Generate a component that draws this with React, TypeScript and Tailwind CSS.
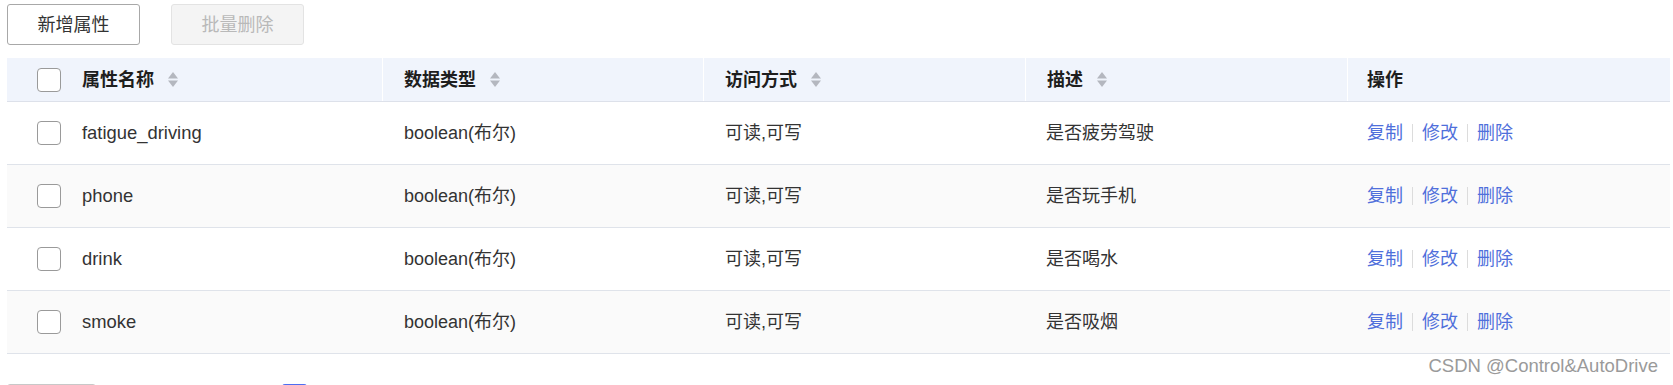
import React from 'react';

type Attr = { name: string; type: string; access: string; desc: string };

const rows: Attr[] = [
  { name: 'fatigue_driving', type: 'boolean(布尔)', access: '可读,可写', desc: '是否疲劳驾驶' },
  { name: 'phone', type: 'boolean(布尔)', access: '可读,可写', desc: '是否玩手机' },
  { name: 'drink', type: 'boolean(布尔)', access: '可读,可写', desc: '是否喝水' },
  { name: 'smoke', type: 'boolean(布尔)', access: '可读,可写', desc: '是否吸烟' },
];

const SortIcon: React.FC = () => (
  <svg width="12" height="17" viewBox="0 0 12 17" className="ml-[13px] shrink-0">
    <path d="M6 1 L11 7.5 H1 Z" fill="#b4b7bf" />
    <path d="M6 16 L11 9.5 H1 Z" fill="#b4b7bf" />
  </svg>
);

const Checkbox: React.FC = () => (
  <span className="inline-block w-[24px] h-[24px] shrink-0 rounded-[4px] border border-[#9a9a9a] bg-white" />
);

const App: React.FC = () => {
  return (
    <div
      className="relative w-[1673px] h-[385px] overflow-hidden bg-white text-[18px] text-[#333]"
      style={{ fontFamily: '"Liberation Sans", "Noto Sans CJK SC", sans-serif' }}
    >
      <div className="pl-[7px] pt-[4px] w-[1670px]">
        {/* Toolbar */}
        <div className="flex gap-[31px]">
          <button className="w-[133px] h-[41px] rounded-[3px] border border-[#a8a8a8] bg-white text-[18px] leading-none text-[#333]">
            新增属性
          </button>
          <button className="w-[133px] h-[41px] rounded-[3px] border border-[#e3e3e3] bg-[#f4f4f4] text-[18px] leading-none text-[#b9b9b9]">
            批量删除
          </button>
        </div>

        {/* Table */}
        <div className="mt-[13px]">
          <div className="grid grid-cols-[375px_321px_322px_322px_1fr] h-[44px] bg-[#f0f4fc] border-b border-[#dde1ea] font-bold text-[#1e1e1e] leading-none">
            <div className="flex items-center pl-[30px]">
              <Checkbox />
              <span className="ml-[21px]">属性名称</span>
              <SortIcon />
            </div>
            <div className="flex items-center pl-[21px] border-l border-white">
              <span>数据类型</span>
              <SortIcon />
            </div>
            <div className="flex items-center pl-[21px] border-l border-white">
              <span>访问方式</span>
              <SortIcon />
            </div>
            <div className="flex items-center pl-[21px] border-l border-white">
              <span>描述</span>
              <SortIcon />
            </div>
            <div className="flex items-center pl-[19px] border-l border-white">
              <span>操作</span>
            </div>
          </div>

          {rows.map((r, i) => (
            <div
              key={r.name}
              className={`grid grid-cols-[375px_321px_322px_322px_1fr] h-[63px] border-b border-[#dfe3ea] leading-none ${
                i % 2 === 1 ? 'bg-[#fafafa]' : 'bg-white'
              }`}
            >
              <div className="flex items-center pl-[30px]">
                <Checkbox />
                <span className="ml-[21px] text-[18.4px]">{r.name}</span>
              </div>
              <div className="flex items-center pl-[22px]">{r.type}</div>
              <div className="flex items-center pl-[22px]">{r.access}</div>
              <div className="flex items-center pl-[21px]">{r.desc}</div>
              <div className="flex items-center pl-[20px] text-[#4f6fdb]">
                <span>复制</span>
                <span className="mx-[9px] w-px h-[18px] bg-[#dcdcdc]" />
                <span>修改</span>
                <span className="mx-[9px] w-px h-[18px] bg-[#dcdcdc]" />
                <span>删除</span>
              </div>
            </div>
          ))}

          {/* Pagination (mostly cut off) */}
          <div className="flex items-start mt-[30px] h-[32px]">
            <div className="w-[89px] h-[32px] rounded-[3px] border border-[#c8c8c8] bg-white" />
            <div className="ml-[186px] w-[25px] h-[32px] rounded-[3px] bg-[#4e6ef2]" />
          </div>
        </div>
      </div>

      {/* Watermark */}
      <div className="absolute right-[15px] top-[357px] text-[18.5px] leading-none text-[#9a9a9a] whitespace-nowrap">
        CSDN @Control&amp;AutoDrive
      </div>
    </div>
  );
};

export default App;
